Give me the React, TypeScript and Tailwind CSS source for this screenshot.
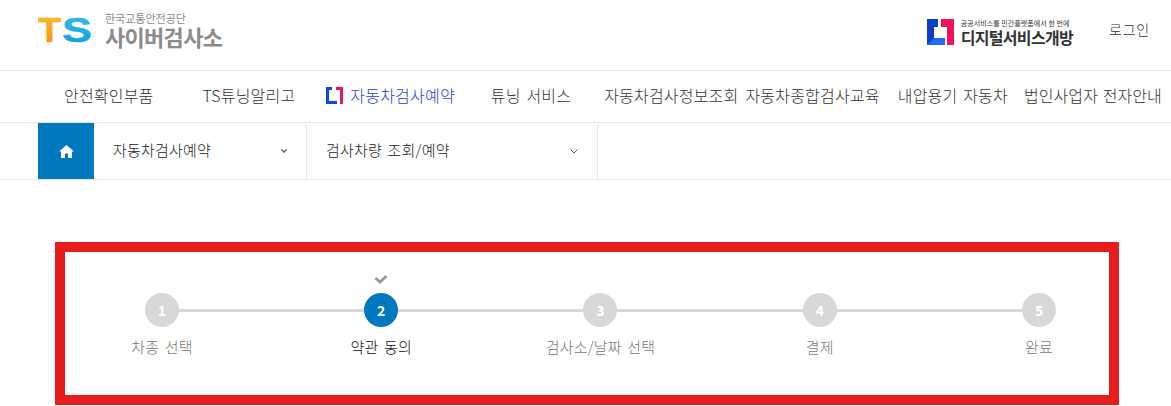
import React from 'react';

const KR = "font-['Noto_Sans_CJK_KR','Noto_Sans',sans-serif]";

const steps = [
  { n: 1, label: '차종 선택' },
  { n: 2, label: '약관 동의', active: true },
  { n: 3, label: '검사소/날짜 선택' },
  { n: 4, label: '결제' },
  { n: 5, label: '완료' },
];

const TsLogo = () => (
  <svg width="54" height="42" viewBox="0 0 54 42" className="shrink-0">
    <defs>
      <linearGradient id="tsT" x1="0" y1="0" x2="0" y2="1">
        <stop offset="0" stopColor="#ffc61a" />
        <stop offset="1" stopColor="#f5881f" />
      </linearGradient>
      <linearGradient id="tsS" x1="0" y1="0" x2="0" y2="1">
        <stop offset="0" stopColor="#35c4e8" />
        <stop offset="1" stopColor="#0f9be0" />
      </linearGradient>
    </defs>
    <text x="0" y="33" fill="url(#tsT)" stroke="#f9a61c" strokeWidth="0.5" fontFamily="Liberation Sans" fontWeight="700" fontSize="35" textLength="23" lengthAdjust="spacingAndGlyphs">T</text>
    <text x="24" y="33" fill="url(#tsS)" stroke="#1fb0e4" strokeWidth="0.5" fontFamily="Liberation Sans" fontWeight="700" fontSize="35" textLength="30" lengthAdjust="spacingAndGlyphs">S</text>
  </svg>
);

const DigitalLogo = () => (
  <svg width="27" height="26" viewBox="0 0 27 26" className="shrink-0">
    <path d="M0 0H11V8H7V19H18V26H0Z" fill="#0b3fc8" />
    <path d="M0 26 7 19H18V26Z" fill="#1f6cf5" />
    <path d="M14 0H27V26H20V8H14Z" fill="#f0135a" />
  </svg>
);

const SmallBracket = () => (
  <svg width="17" height="17" viewBox="0 0 17 17" className="shrink-0">
    <path d="M0 0H6V3H3V14H11V17H0Z" fill="#0b49e0" />
    <path d="M10 0H17V17H14V3H10Z" fill="#f0135a" />
  </svg>
);

const Chevron = ({ className }: { className: string }) => (
  <svg viewBox="0 0 8 5" fill="none" stroke="#555" className={className}>
    <path d="M.5.5 4 4 7.5.5" />
  </svg>
);

export default function App() {
  return (
    <div className={`w-[1171px] h-[406px] overflow-hidden bg-white font-light ${KR}`}>
      <header className="h-[71px] border-b border-[#e8e8e8] flex items-center pl-[38px]">
        <div className="flex items-center pb-[10px]">
          <TsLogo />
          <div className="ml-[13px] flex flex-col text-[#8b8b8b]">
            <span className="text-[11px] leading-[12px] font-normal">한국교통안전공단</span>
            <span className="text-[22px] leading-[25px] font-bold tracking-[-0.7px]">사이버검사소</span>
          </div>
        </div>
        <div className="ml-auto flex items-center pb-[6px]">
          <DigitalLogo />
          <div className="ml-[7px] flex flex-col text-[#333]">
            <span className="text-[7px] leading-[10px] font-normal tracking-[0.05px]">공공서비스를 민간플랫폼에서 한 번에</span>
            <span className="text-[16px] leading-[19px] font-bold tracking-[-0.7px]">디지털서비스개방</span>
          </div>
          <span className="ml-[36px] mr-[21px] mb-[6px] text-[14px] tracking-[0.8px] text-[#333]">로그인</span>
        </div>
      </header>

      <nav className="h-[52px] pb-[3px] border-b border-[#e8e8e8] flex items-center text-[16px] tracking-[0.2px] [word-spacing:2px] text-[#333] whitespace-nowrap">
        <span className="ml-[64px]">안전확인부품</span>
        <span className="ml-[49px]">TS튜닝알리고</span>
        <span className="ml-[31px] flex items-center gap-[7px] text-[#1f3fd0]">
          <SmallBracket />
          자동차검사예약
        </span>
        <span className="ml-[36px]">튜닝 서비스</span>
        <span className="ml-[33px]">자동차검사정보조회</span>
        <span className="ml-[7px]">자동차종합검사교육</span>
        <span className="ml-[18px]">내압용기 자동차</span>
        <span className="ml-[16px] tracking-[0.1px] [word-spacing:1px]">법인사업자 전자안내</span>
      </nav>

      <div className="h-[57px] border-b border-[#e8e8e8] flex pl-[38px] text-[15px] tracking-[0.2px] [word-spacing:2px] text-[#222]">
        <div className="w-[56px] bg-[#0079c1] flex items-center justify-center">
          <svg width="15" height="13" viewBox="0 0 15 13" fill="#fff">
            <path d="M7.5 0 15 6.6H13V13H9V8.6H6V13H2V6.6H0Z" />
          </svg>
        </div>
        <div className="w-[213px] border-r border-[#e8e8e8] flex items-center justify-between pl-[19px] pr-[19px]">
          <span className="pb-[1px]">자동차검사예약</span>
          <Chevron className="w-[6px] h-[4px] stroke-[1.5]" />
        </div>
        <div className="w-[291px] border-r border-[#e8e8e8] flex items-center justify-between pl-[19px] pr-[19px]">
          <span className="pb-[1px]">검사차량 조회/예약</span>
          <Chevron className="w-[8px] h-[5px] stroke-[1]" />
        </div>
      </div>

      <section className="mt-[62px] ml-[55px] w-[1064px] h-[163px] border-[10px] border-[#e91c1c] relative">
        <div className="absolute left-[97px] right-[70px] top-[57px] h-[3px] bg-[#d8d8d8]" />
        <ol className="relative grid grid-cols-5 w-[1096.5px] ml-[-12.75px] pt-[41px]">
          {steps.map((s) => (
            <li key={s.n} className="relative flex flex-col items-center">
              {s.active && (
                <svg width="14" height="10" viewBox="0 0 14 10" fill="none" stroke="#999" strokeWidth="3" className="absolute top-[-19px]">
                  <path d="M1.5 4 6 8 12.5 2" />
                </svg>
              )}
              <span className={`w-[34px] h-[34px] pt-[1px] rounded-full flex items-center justify-center text-white text-[14px] font-bold ${s.active ? 'bg-[#0079c1]' : 'bg-[#d8d8d8]'}`}>
                {s.n}
              </span>
              <span className={`mt-[10px] text-[15px] leading-[20px] tracking-[0.2px] [word-spacing:2px] whitespace-nowrap ${s.active ? 'text-[#111]' : 'text-[#777]'}`}>
                {s.label}
              </span>
            </li>
          ))}
        </ol>
      </section>
    </div>
  );
}
